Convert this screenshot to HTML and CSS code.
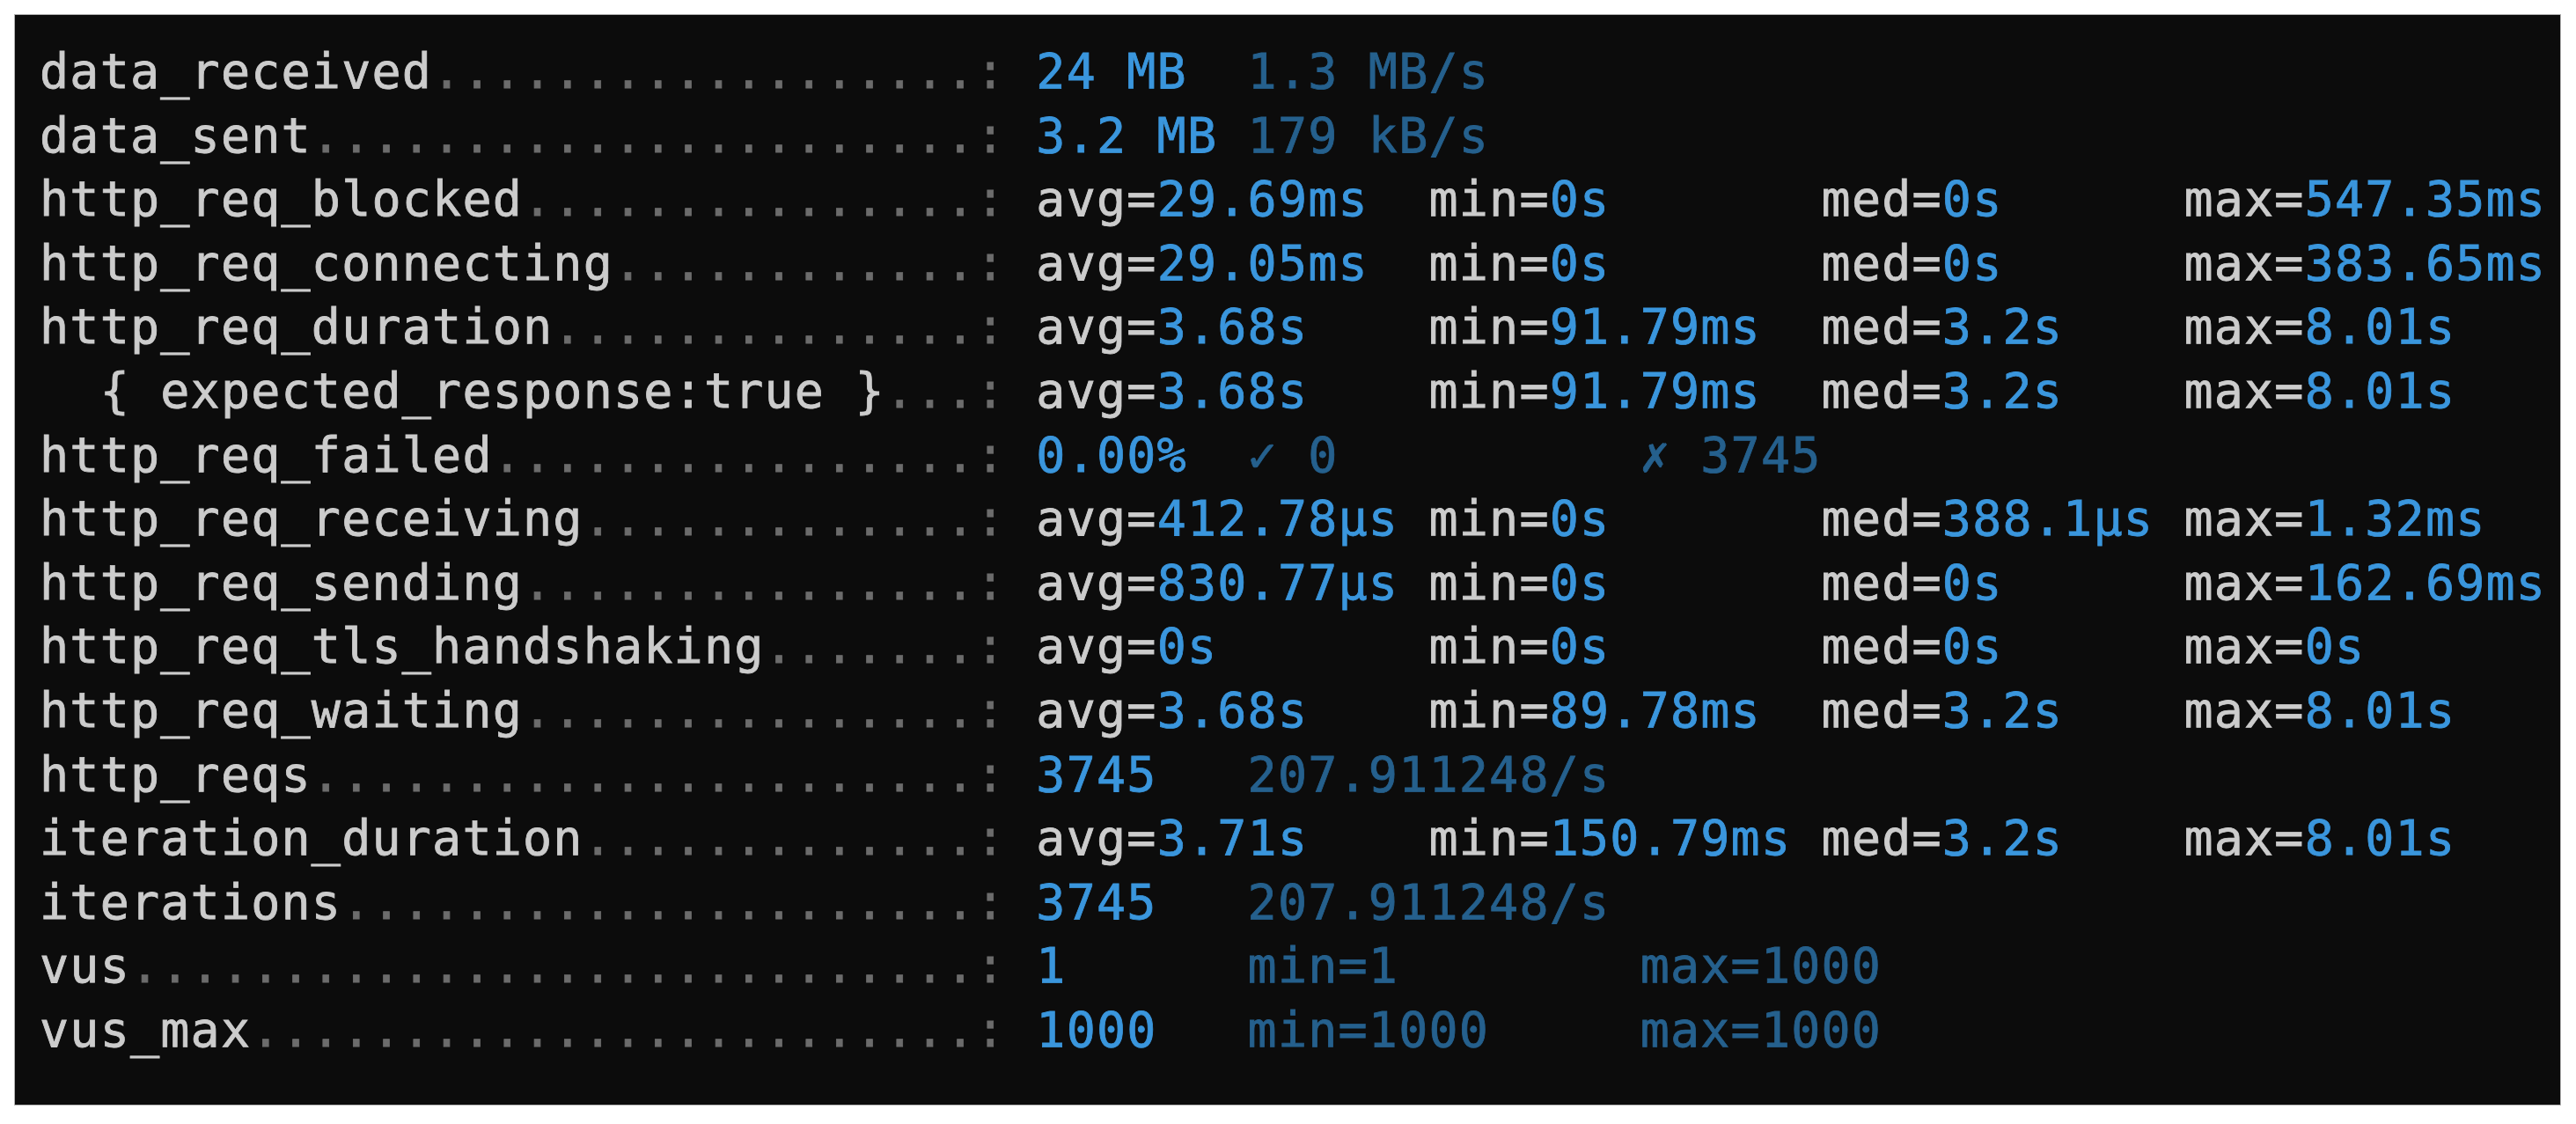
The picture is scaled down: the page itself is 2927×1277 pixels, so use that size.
FILE: index.html
```html
<!DOCTYPE html>
<html lang="en">
<head>
<meta charset="utf-8">
<title>k6 summary</title>
<link rel="stylesheet" href="styles.css">
</head>
<body>
<div class="terminal">
<div class="line"><span class="l">data_received</span><span class="d">..................:</span> <span class="v">24 MB</span>  <span class="f">1.3 MB/s</span></div>
<div class="line"><span class="l">data_sent</span><span class="d">......................:</span> <span class="v">3.2 MB</span> <span class="f">179 kB/s</span></div>
<div class="line"><span class="l">http_req_blocked</span><span class="d">...............:</span> <span class="l">avg=</span><span class="v">29.69ms</span>  <span class="l">min=</span><span class="v">0s</span>       <span class="l">med=</span><span class="v">0s</span>      <span class="l">max=</span><span class="v">547.35ms</span></div>
<div class="line"><span class="l">http_req_connecting</span><span class="d">............:</span> <span class="l">avg=</span><span class="v">29.05ms</span>  <span class="l">min=</span><span class="v">0s</span>       <span class="l">med=</span><span class="v">0s</span>      <span class="l">max=</span><span class="v">383.65ms</span></div>
<div class="line"><span class="l">http_req_duration</span><span class="d">..............:</span> <span class="l">avg=</span><span class="v">3.68s</span>    <span class="l">min=</span><span class="v">91.79ms</span>  <span class="l">med=</span><span class="v">3.2s</span>    <span class="l">max=</span><span class="v">8.01s</span></div>
<div class="line"><span class="l">  { expected_response:true }</span><span class="d">...:</span> <span class="l">avg=</span><span class="v">3.68s</span>    <span class="l">min=</span><span class="v">91.79ms</span>  <span class="l">med=</span><span class="v">3.2s</span>    <span class="l">max=</span><span class="v">8.01s</span></div>
<div class="line"><span class="l">http_req_failed</span><span class="d">................:</span> <span class="v">0.00%</span>  <span class="f">✓ 0</span>          <span class="f">✗ 3745</span></div>
<div class="line"><span class="l">http_req_receiving</span><span class="d">.............:</span> <span class="l">avg=</span><span class="v">412.78µs</span> <span class="l">min=</span><span class="v">0s</span>       <span class="l">med=</span><span class="v">388.1µs</span> <span class="l">max=</span><span class="v">1.32ms</span></div>
<div class="line"><span class="l">http_req_sending</span><span class="d">...............:</span> <span class="l">avg=</span><span class="v">830.77µs</span> <span class="l">min=</span><span class="v">0s</span>       <span class="l">med=</span><span class="v">0s</span>      <span class="l">max=</span><span class="v">162.69ms</span></div>
<div class="line"><span class="l">http_req_tls_handshaking</span><span class="d">.......:</span> <span class="l">avg=</span><span class="v">0s</span>       <span class="l">min=</span><span class="v">0s</span>       <span class="l">med=</span><span class="v">0s</span>      <span class="l">max=</span><span class="v">0s</span></div>
<div class="line"><span class="l">http_req_waiting</span><span class="d">...............:</span> <span class="l">avg=</span><span class="v">3.68s</span>    <span class="l">min=</span><span class="v">89.78ms</span>  <span class="l">med=</span><span class="v">3.2s</span>    <span class="l">max=</span><span class="v">8.01s</span></div>
<div class="line"><span class="l">http_reqs</span><span class="d">......................:</span> <span class="v">3745</span>   <span class="f">207.911248/s</span></div>
<div class="line"><span class="l">iteration_duration</span><span class="d">.............:</span> <span class="l">avg=</span><span class="v">3.71s</span>    <span class="l">min=</span><span class="v">150.79ms</span> <span class="l">med=</span><span class="v">3.2s</span>    <span class="l">max=</span><span class="v">8.01s</span></div>
<div class="line"><span class="l">iterations</span><span class="d">.....................:</span> <span class="v">3745</span>   <span class="f">207.911248/s</span></div>
<div class="line"><span class="l">vus</span><span class="d">............................:</span> <span class="v">1</span>      <span class="f">min=1</span>        <span class="f">max=1000</span></div>
<div class="line"><span class="l">vus_max</span><span class="d">........................:</span> <span class="v">1000</span>   <span class="f">min=1000</span>     <span class="f">max=1000</span></div>
</div>
</body>
</html>
```

FILE: styles.css
```css
html, body {
  margin: 0;
  padding: 0;
  background: #ffffff;
}

body {
  padding: 16px 0 0 16px;
}

.terminal {
  box-sizing: border-box;
  width: 2894px;
  height: 1240px;
  background: #0c0c0c;
  border: 1px solid #b4b4b4;
  padding: 28px 0 0 28px;
  font-family: "DejaVu Sans Mono", "Liberation Mono", monospace;
  font-size: 55px;
  letter-spacing: 1.2px;
  line-height: 72.6px;
  color: #cccccc;
  -webkit-text-stroke: 0.8px currentColor;
}

.line {
  white-space: pre;
}

.l {
  color: #cccccc;
}

.d {
  color: #6c6c6c;
}

.v {
  color: #3a96dd;
}

.f {
  color: #25608d;
}
```
